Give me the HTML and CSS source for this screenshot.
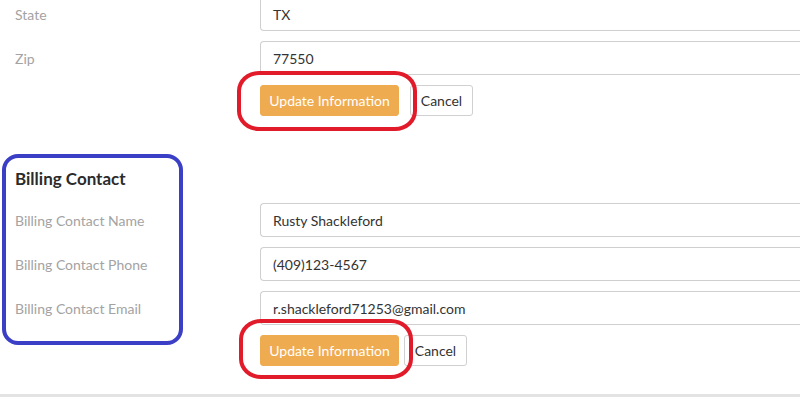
FILE: index.html
```
<!DOCTYPE html>
<html>
<head>
<meta charset="utf-8">
<link rel="stylesheet" href="styles.css">
</head>
<body>
<div class="page">
  <section class="section section-top">
    <div class="form-row">
      <label class="label">State</label>
      <div class="input">TX</div>
    </div>
    <div class="form-row">
      <label class="label">Zip</label>
      <div class="input">77550</div>
    </div>
    <div class="actions">
      <button class="btn btn-primary">Update Information</button>
      <button class="btn btn-default btn-gap-wide">Cancel</button>
      <span class="mark mark-red mark-red-1"></span>
    </div>
  </section>

  <section class="section section-billing">
    <h3 class="heading">Billing Contact</h3>
    <div class="form-row">
      <label class="label">Billing Contact Name</label>
      <div class="input">Rusty Shackleford</div>
    </div>
    <div class="form-row">
      <label class="label">Billing Contact Phone</label>
      <div class="input">(409)123-4567</div>
    </div>
    <div class="form-row">
      <label class="label">Billing Contact Email</label>
      <div class="input">r.shackleford71253@gmail.com</div>
    </div>
    <div class="actions">
      <button class="btn btn-primary">Update Information</button>
      <button class="btn btn-default btn-gap-narrow">Cancel</button>
      <span class="mark mark-red mark-red-2"></span>
    </div>
    <span class="mark mark-blue"></span>
  </section>
  <div class="footer-bar"></div>
</div>
</body>
</html>
```

FILE: styles.css
```
* { box-sizing: border-box; }
html, body {
  margin: 0;
  padding: 0;
  background: #fff;
  overflow: hidden;
}
body {
  width: 800px;
  height: 400px;
  font-family: Lato, "Open Sans", sans-serif;
  font-size: 14px;
  color: #333;
}
.page {
  position: relative;
  width: 800px;
  height: 400px;
}
.section {
  position: relative;
  padding-left: 15px;
  display: flex;
  flex-direction: column;
  gap: 10px;
}
.section-top {
  margin-top: -3px;
}
.form-row {
  display: grid;
  grid-template-columns: 245px 1fr;
  align-items: center;
  height: 34px;
}
.label {
  color: #a3a3a3;
  font-size: 14px;
}
.input {
  height: 34px;
  border: 1px solid #cfcfcf;
  border-right: none;
  border-radius: 4px 0 0 4px;
  padding: 0 12px;
  display: flex;
  align-items: center;
  color: #333;
  font-size: 14px;
  white-space: nowrap;
}
.actions {
  position: relative;
  display: flex;
  align-items: center;
  padding-left: 245px;
  height: 31px;
}
.btn {
  font-family: Lato, "Open Sans", sans-serif;
  font-size: 14px;
  height: 31px;
  border-radius: 3px;
  padding: 0;
  white-space: nowrap;
  text-align: center;
  cursor: pointer;
}
.btn-primary {
  width: 139px;
  background: #efab4f;
  border: 1px solid #efab4f;
  color: #fff;
}
.btn-default {
  width: 63px;
  background: #fff;
  border: 1px solid #d0d0d0;
  color: #333;
}
.btn-gap-wide { margin-left: 11px; }
.btn-gap-narrow { margin-left: 5px; }
.section-billing {
  margin-top: 53px;
}
.heading {
  margin: 0;
  font-size: 17px;
  font-weight: 700;
  color: #2b2b2b;
  line-height: 20px;
  height: 20px;
  margin-bottom: 4px;
}
.footer-bar {
  position: absolute;
  left: 0;
  right: 0;
  bottom: 0;
  height: 3px;
  background: #e3e3e3;
}
.mark {
  position: absolute;
  pointer-events: none;
}
.mark-red {
  border: 4px solid #e21b2b;
}
.mark-red-1 {
  left: 222px;
  top: -14px;
  width: 180px;
  height: 60px;
  border-radius: 22px / 20px;
}
.mark-red-2 {
  left: 224px;
  top: -16px;
  width: 174px;
  height: 60px;
  border-radius: 22px / 20px;
}
.mark-blue {
  left: 2px;
  top: -15px;
  width: 181px;
  height: 191px;
  border: 4px solid #3b3fc6;
  border-radius: 16px;
}
```
